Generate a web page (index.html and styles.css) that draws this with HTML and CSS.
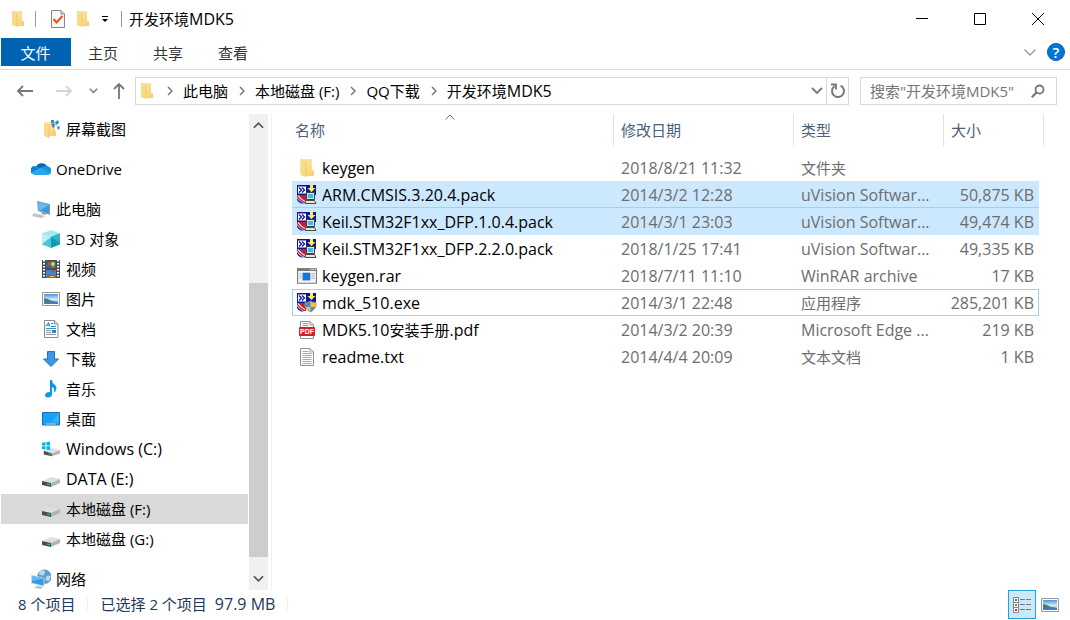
FILE: index.html
```html
<!DOCTYPE html>
<html lang="zh-CN">
<head>
<meta charset="utf-8">
<meta name="viewport" content="width=device-width, initial-scale=1">
<title>开发环境MDK5</title>
<link rel="stylesheet" href="styles.css">
</head>
<body>
<svg class="sprite" aria-hidden="true">
  <defs>
    <linearGradient id="gold" x1="0" y1="0" x2="1" y2="1"><stop offset="0" stop-color="#ffe9a6"/><stop offset="1" stop-color="#f6cf6a"/></linearGradient>
    <linearGradient id="sky" x1="0" y1="0" x2="0" y2="1"><stop offset="0" stop-color="#4f94dc"/><stop offset=".55" stop-color="#d4ebf8"/><stop offset="1" stop-color="#4a88b8"/></linearGradient>
  </defs>
  <symbol id="folder" viewBox="0 0 18 18">
    <path d="M3 1h10v10h2v5H5z" fill="#f3cf74"/>
    <path d="M5 1h8v10h2v5H6z" fill="url(#gold)"/>
    <path d="M3 1l5 2v14l-5-2z" fill="#f9dc87"/>
    <path d="M8 3v14" stroke="#e9bd57" stroke-width=".6"/>
  </symbol>
  <symbol id="folder-shot" viewBox="0 0 18 18">
    <path d="M4 2h9v9h1v5H6z" fill="url(#gold)"/>
    <path d="M2 2l5 2v14l-5-2z" fill="#f9dc87"/>
    <path d="M7 4v14" stroke="#e2b550" stroke-width=".6"/>
    <path d="M10 1l7 7M10 6l5-5" stroke="#bcd9f0" stroke-width="1"/>
    <path d="M9 0h3v3H9zM13 2l3-2 1 3-3 2zM9 4l3-1 1 3-2 2zM15 7l2-1 1 2-2 2z" fill="#3b87cf"/>
  </symbol>
  <symbol id="cloud" viewBox="0 0 20 14">
    <path d="M5 5a6 5.500 0 0 1 10.500-1.500L18 6 11 9 3 6z" fill="#0b63b8"/>
    <path d="M2 12A4 4 0 0 1 5 4.500q2.500-.5 5 1.500l4 5-8 2H4z" fill="#1580d3"/>
    <path d="M15.500 4.500A4.300 4.300 0 0 1 17 13H5Q1.500 12.500 1 10l9-4.500z" fill="#28a8ea"/>
    <path d="M10 6q2-2.500 5.500-1.700A4.300 4.300 0 0 1 19 11z" fill="#1793df"/>
  </symbol>
  <symbol id="pc" viewBox="0 0 20 18">
    <path d="M6 1l13 3v11L7 11z" fill="#8f9ba5"/>
    <path d="M7 2.200l11 2.600v8.700L8 10z" fill="#2f9de8"/>
    <path d="M7 2.200l11 2.600-9 5.800L8 10z" fill="#64baf2"/>
    <path d="M11 12l4 1v2l-5-1z" fill="#9aa4ab"/>
    <path d="M3 13l12 3-4 2-11-2z" fill="#d2d9de"/>
    <path d="M3 14l9 2.500M2 15.500l9 2" stroke="#9aa6af" stroke-width=".6"/>
  </symbol>
  <symbol id="cube" viewBox="0 0 18 18">
    <path d="M9 0l9 3.500L9 7 0 3.500z" fill="#a4e9f0"/>
    <path d="M0 3.500L9 7v11l-9-3.500z" fill="#4cc5d6"/>
    <path d="M18 3.500L9 7v11l9-3.500z" fill="#1199b8"/>
    <path d="M0 3.500L9 7l-9 7z" fill="#bff0f4"/>
    <path d="M18 3.500L9 7l9 6z" fill="#2bb4d2"/>
  </symbol>
  <symbol id="film" viewBox="0 0 18 18">
    <path d="M0 0h18v18H0z" fill="#4b4b4b"/>
    <path d="M2 0v18M16 0v18" stroke="#fff" stroke-width="2" stroke-dasharray="1.500 1.500"/>
    <path d="M4 1h10v7H4z" fill="#315ea8"/><path d="M4 10h10v8H4z" fill="#3c86db"/>
    <path d="M5 6h4V2H7zM5 17l3-3 3 2 3-1v3z" fill="#b2542c"/>
    <circle cx="11" cy="4" r="2" fill="#eed038"/><path d="M9 6h4v2H9z" fill="#39a04a"/><circle cx="11" cy="11" r="1.500" fill="#dd3d30"/>
    <path d="M8 16h4v1H8z" fill="#e9cc37"/>
  </symbol>
  <symbol id="photo" viewBox="0 0 18 14">
    <path d="M.5.5h17v13H.5z" fill="#fff" stroke="#999"/>
    <path d="M2 2h14v10H2z" fill="url(#sky)"/>
    <path d="M2 6l4 1 4 2 6 1v1H2z" fill="#4d7f6d"/>
    <path d="M2 10h14v2H2z" fill="#3e80b6"/>
  </symbol>
  <symbol id="doc" viewBox="0 0 18 18">
    <path d="M2.500.5h10L16 4v13.500H2.500z" fill="#fff" stroke="#8b8b8b"/>
    <path d="M12.500 .5V4H16" fill="#e8e8e8" stroke="#8b8b8b"/>
    <path d="M4 6.500l2.500-4 1 4M5 5h2.500M9 3.500h2" stroke="#1d83c6" fill="none"/>
    <path d="M9 6.500h5M4 8.500h10" stroke="#2c92cc"/><path d="M4 10.500h5M4 12.500h5M4 14.500h10" stroke="#8d9aa3"/>
    <path d="M10 10h4v3h-4z" fill="#3782b8"/>
  </symbol>
  <symbol id="down" viewBox="0 0 18 18"><path d="M5.500 1.500h7V9h4L9 16.500 1.500 9h4z" fill="#3a97e4" stroke="#1f74be"/></symbol>
  <symbol id="note" viewBox="0 0 18 18"><path d="M8 0h2q0 3 3 5 3 3 0 7h-1q1-4-2-5v7q0 3-3.500 3.500Q3 17.500 3 15q.5-3 5-3z" fill="#0b96ec"/></symbol>
  <symbol id="desktop" viewBox="0 0 18 14"><path d="M.5.5h17v12.500H.5z" fill="#18a1f8" stroke="#1a6eae"/><path d="M17 1v9L9 11z" fill="#36b1fb"/><path d="M0 11.500h18V13H0z" fill="#1270b5"/><path d="M2 12h1M4 12h10M15 12h1" stroke="#fff" stroke-width=".8"/></symbol>
  <symbol id="disk" viewBox="0 0 18 18">
    <path d="M0 11l9-4 9 2-9 4z" fill="#dedfe2"/>
    <path d="M0 11l9 2v4l-9-2z" fill="#4a4b4d"/>
    <path d="M9 13l9-4v4l-9 4z" fill="#b2b3b7"/>
    <path d="M5 14l3 .7" stroke="#37d257" stroke-width="1.200"/>
  </symbol>
  <symbol id="windisk" viewBox="0 0 20 18">
    <path d="M3 11l8-3 9 2-9 4z" fill="#dedfe2"/><path d="M2 11l9 3v3l-9-2z" fill="#4a4b4d"/><path d="M11 14l9-4v4l-9 3z" fill="#b2b3b7"/>
    <path d="M7 14.500l3 .7" stroke="#37d257"/>
    <path d="M0 2l4-.5V5H0zM5 1.300L9 1v4H5zM0 6h4v3.500L0 9zM5 6h4v4l-4-.4z" fill="#00b4ef"/>
  </symbol>
  <symbol id="network" viewBox="0 0 18 18">
    <circle cx="12" cy="7" r="6.500" fill="#5d9bc9"/><path d="M8 2q4-2 5 1l-2 3-4-1zM14 6l4 0-2 5-3-1z" fill="#b8dbe9"/>
    <path d="M0 5l12 3v8L0 13z" fill="#d5e6ef"/><path d="M.8 6l10.500 2.500v6.500L.8 12.300z" fill="#2f9be5"/><path d="M.8 6l10.500 2.500L1 11z" fill="#65baf0"/>
    <path d="M5 15l6 1-2 2-6-1z" fill="#b8c3cb"/>
  </symbol>
  <symbol id="keil-base" viewBox="0 0 20 20">
    <path d="M0 0h19v10H0z" fill="#10139c"/>
    <path d="M1 1.500h8v7H1z" fill="#fff"/>
    <path d="M2 2.500l2.500 2.500L2 7.500M5 2.500L7.500 5 5 7.500" fill="none" stroke="#10139c" stroke-width="1.300"/>
    <path d="M0 10h9v8H7q-4-2-7-6z" fill="#c4202c"/>
    <path d="M0 13q3 4 7 5.500H4Q1 17 0 15z" fill="#2a2aa8"/>
    <path d="M1 10.500q3 4 7 6" fill="none" stroke="#fff" stroke-width="1.200"/>
    <path d="M13 0h3v3h2.500l-4 4-4-4H13z" fill="#ffec52"/>
  </symbol>
  <symbol id="keil" viewBox="0 0 20 20">
    <use href="#keil-base"/>
    <path d="M9.500 7.500h8v7h-8z" fill="#dfe3e6" stroke="#333c48"/><path d="M11 9h5v4h-5z" fill="#35bfe4"/>
    <path d="M13 3h3v2l-1.500 2L13 5z" fill="#ffec52"/>
    <path d="M8.500 15.500h9l1.500 3H8z" fill="#e7e6d8" stroke="#4b4b4b"/>
  </symbol>
  <symbol id="keil-exe" viewBox="0 0 20 20">
    <use href="#keil-base"/><path d="M8 9.500q4 0 5.500-1.500 2 1.500 5.500 1.500 1 6-5.500 9.500Q7 15.500 8 9.500z" fill="#4f8fc7" stroke="#8a8f94"/>
    <path d="M13.500 8.500V14h5q.5-2 .3-4Q15.500 10 13.500 8.500zM8.500 14h5v4.500q-4-2-5-4.500z" fill="#f0c341"/>
  </symbol>
  <symbol id="rar" viewBox="0 0 18 14"><path d="M.5.5h17v13H.5z" fill="#f7f7f7" stroke="#777"/><path d="M0 0h18v2.500H0z" fill="#7b7b7b"/><path d="M12 1h1M14 1h1M16 1h1" stroke="#fff"/><path d="M5 4h7v7H5z" fill="#1478d1"/><path d="M2 5h2M2 7h2M2 9h2M13 5h3M13 7h3M13 9h3" stroke="#aaa"/></symbol>
  <symbol id="txt" viewBox="0 0 16 18"><path d="M1.500.5H11L14.500 4v13.500h-13z" fill="#fafafa" stroke="#8f8f8f"/><path d="M11 .5V4h3.500M3.500 3.500h6M3.500 5.500h9M3.500 7.500h9M3.500 9.500h9M3.500 11.500h9M3.500 13.500h9M3.500 15.500h9" stroke="#999" fill="none" stroke-width=".8"/></symbol>
  <symbol id="check" viewBox="0 0 14 18"><path d="M.5.5H10L13.500 4v13.500H.5z" fill="#f7f7f7" stroke="#858585"/><path d="M10 .5V4h3.500" fill="#ddd" stroke="#858585"/><path d="M2.500 9l3 3.500L11.500 6" fill="none" stroke="#e8561d" stroke-width="2"/></symbol>
  <symbol id="chev-r" viewBox="0 0 6 10"><path d="M1 1l4 4-4 4" fill="none" stroke="#777" stroke-width="1.500"/></symbol>
  <symbol id="chev-d" viewBox="0 0 12 8"><path d="M1 1l5 5 5-5" fill="none" stroke="currentColor" stroke-width="1.800"/></symbol>
  <symbol id="arrow" viewBox="0 0 16 12"><path d="M16 6H1M6 1L1 6l5 5" fill="none" stroke="currentColor" stroke-width="1.800"/></symbol>
</svg>

<div class="window">
  <header class="titlebar">
    <svg class="i18"><use href="#folder"/></svg>
    <span class="rule"></span>
    <button class="quick check" aria-label="属性"><svg><use href="#check"/></svg></button>
    <button class="quick newfolder" aria-label="新建文件夹"><svg><use href="#folder"/></svg></button>
    <button class="quick more" aria-label="自定义快速访问工具栏"><svg viewBox="0 0 8 8"><path d="M1 1.500h6" stroke="#000"/><path d="M1 4h6L4 7z"/></svg></button>
    <span class="rule second"></span>
    <h1>开发环境<span class="latin">MDK5</span></h1>
    <div class="winbuttons">
      <button aria-label="最小化"><svg viewBox="0 0 12 12"><path d="M0 5.500h12"/></svg></button>
      <button aria-label="最大化"><svg viewBox="0 0 12 12"><path d="M.5.5h11v11H.5z"/></svg></button>
      <button aria-label="关闭"><svg viewBox="0 0 12 12"><path d="M0 0l12 12M12 0L0 12"/></svg></button>
    </div>
  </header>

  <nav class="ribbon" aria-label="功能区">
    <button class="tab file">文件</button>
    <button class="tab">主页</button>
    <button class="tab">共享</button>
    <button class="tab">查看</button>
    <button class="expand" aria-label="展开功能区"><svg viewBox="0 0 12 7"><path d="M.5.5L6 6 11.500.5" fill="none" stroke="#999" stroke-width="1.300"/></svg></button>
    <button class="help" aria-label="帮助">?</button>
  </nav>

  <div class="address">
    <button class="nav-btn back" aria-label="后退"><svg><use href="#arrow"/></svg></button>
    <button class="nav-btn forward" aria-label="前进"><svg><use href="#arrow"/></svg></button>
    <button class="nav-btn recent" aria-label="最近位置"><svg><use href="#chev-d"/></svg></button>
    <button class="nav-btn up" aria-label="上移"><svg viewBox="0 0 12 16"><path d="M6 16V1M1 6l5-5 5 5" fill="none" stroke="#777" stroke-width="1.800"/></svg></button>
    <div class="path">
      <svg class="i18"><use href="#folder"/></svg>
      <svg class="crumb-sep"><use href="#chev-r"/></svg><a href="#">此电脑</a>
      <svg class="crumb-sep"><use href="#chev-r"/></svg><a href="#">本地磁盘 (F:)</a>
      <svg class="crumb-sep"><use href="#chev-r"/></svg><a href="#">QQ下载</a>
      <svg class="crumb-sep"><use href="#chev-r"/></svg><a href="#">开发环境<span class="latin">MDK5</span></a>
      <button class="drop" aria-label="以前的位置"><svg><use href="#chev-d"/></svg></button>
      <button class="refresh" aria-label="刷新"><svg viewBox="0 0 16 16"><path d="M10.500 2.600A6 6 0 1 1 4.500 3.200" fill="none" stroke="#777" stroke-width="2"/><path d="M1 1.500h5v5" fill="none" stroke="#777" stroke-width="1.800"/></svg></button>
    </div>
    <label class="search">
      <input type="text" placeholder='搜索"开发环境MDK5"' aria-label="搜索">
      <svg viewBox="0 0 14 14"><circle cx="8.500" cy="5.500" r="4" fill="none" stroke="#777" stroke-width="1.800"/><path d="M5.500 8.500L.8 13.200" stroke="#777" stroke-width="2.200"/></svg>
    </label>
  </div>

  <div class="body">
    <nav class="tree" aria-label="导航窗格">
      <a href="#" class="child"><svg class="i18"><use href="#folder-shot"/></svg>屏幕截图</a>
      <a href="#" class="root"><svg class="i20"><use href="#cloud"/></svg>OneDrive</a>
      <a href="#" class="root"><svg class="i20"><use href="#pc"/></svg>此电脑</a>
      <a href="#" class="child"><svg class="i18"><use href="#cube"/></svg>3D 对象</a>
      <a href="#" class="child"><svg class="i18"><use href="#film"/></svg>视频</a>
      <a href="#" class="child"><svg class="i18"><use href="#photo"/></svg>图片</a>
      <a href="#" class="child"><svg class="i18"><use href="#doc"/></svg>文档</a>
      <a href="#" class="child"><svg class="i18"><use href="#down"/></svg>下载</a>
      <a href="#" class="child"><svg class="i18"><use href="#note"/></svg>音乐</a>
      <a href="#" class="child"><svg class="i18"><use href="#desktop"/></svg>桌面</a>
      <a href="#" class="child latin"><svg class="i18"><use href="#windisk"/></svg>Windows (C:)</a>
      <a href="#" class="child latin"><svg class="i18"><use href="#disk"/></svg>DATA (E:)</a>
      <a href="#" class="child current" aria-current="true"><svg class="i18"><use href="#disk"/></svg>本地磁盘 (F:)</a>
      <a href="#" class="child"><svg class="i18"><use href="#disk"/></svg>本地磁盘 (G:)</a>
      <a href="#" class="root"><svg class="i20"><use href="#network"/></svg>网络</a>
    </nav>
    <div class="scrollbar">
      <button class="flip" aria-label="向上滚动"><svg><use href="#chev-d"/></svg></button>
      <div class="track"><div class="thumb"></div></div>
      <button aria-label="向下滚动"><svg><use href="#chev-d"/></svg></button>
    </div>
    <main class="files">
      <table>
        <colgroup><col><col class="c-date"><col class="c-type"><col class="c-size"><col class="c-end"></colgroup>
        <thead>
          <tr><th aria-sort="ascending">名称<svg class="sort" viewBox="0 0 10 6"><path d="M.5 5.500L5 1l4.500 4.500" fill="none" stroke="#777"/></svg></th><th>修改日期</th><th>类型</th><th colspan="2">大小</th></tr>
        </thead>
        <tbody>
          <tr><td><span class="name"><svg class="i20"><use href="#folder"/></svg>keygen</span></td><td>2018/8/21 11:32</td><td><span class="cjk">文件夹</span></td><td></td></tr>
          <tr class="selected"><td><span class="name"><svg class="i20"><use href="#keil"/></svg>ARM.CMSIS.3.20.4.pack</span></td><td>2014/3/2 12:28</td><td>uVision Softwar...</td><td>50,875 KB</td></tr>
          <tr class="selected"><td><span class="name"><svg class="i20"><use href="#keil"/></svg>Keil.STM32F1xx_DFP.1.0.4.pack</span></td><td>2014/3/1 23:03</td><td>uVision Softwar...</td><td>49,474 KB</td></tr>
          <tr><td><span class="name"><svg class="i20"><use href="#keil"/></svg>Keil.STM32F1xx_DFP.2.2.0.pack</span></td><td>2018/1/25 17:41</td><td>uVision Softwar...</td><td>49,335 KB</td></tr>
          <tr><td><span class="name"><svg class="i20 small"><use href="#rar"/></svg>keygen.rar</span></td><td>2018/7/11 11:10</td><td>WinRAR archive</td><td>17 KB</td></tr>
          <tr class="focused"><td><span class="name"><svg class="i20"><use href="#keil-exe"/></svg>mdk_510.exe</span></td><td>2014/3/1 22:48</td><td><span class="cjk">应用程序</span></td><td>285,201 KB</td></tr>
          <tr><td><span class="name"><svg class="i20 small" viewBox="0 0 16 18"><path d="M1.500.5H11L14.500 4v13.500h-13z" fill="#fff" stroke="#8d8d8d"/><path d="M11 .5V4h3.500M3.500 2.500h6M3.500 4.500h6" stroke="#999" fill="none"/><rect y="6" width="16" height="9" rx="1" fill="#d21f28"/><text class="pdf-label" x="8" y="13" text-anchor="middle">PDF</text></svg><span>MDK5.10<span class="cjk">安装手册</span>.pdf</span></span></td><td>2014/3/2 20:39</td><td>Microsoft Edge ...</td><td>219 KB</td></tr>
          <tr><td><span class="name"><svg class="i20 small"><use href="#txt"/></svg>readme.txt</span></td><td>2014/4/4 20:09</td><td><span class="cjk">文本文档</span></td><td>1 KB</td></tr>
        </tbody>
      </table>
    </main>
  </div>

  <footer class="status">
    <span class="count">8 个项目</span>
    <span class="picked">已选择 2 个项目<span class="latin">97.9 MB</span></span>
    <div class="views">
      <button class="active" aria-label="详细信息"><svg viewBox="0 0 18 16"><path d="M.5.5h5v15h-5zM.5 5.500h5M.5 10.500h5" fill="#fff" stroke="#888"/><path d="M2 3h2" stroke="#2a8fa8" stroke-width="2"/><path d="M2 8h2" stroke="#9a7d3b" stroke-width="2"/><path d="M2 13h2" stroke="#d22" stroke-width="2"/><path d="M7 2.500h5M13 2.500h5M7 7.500h5M13 7.500h5M7 12.500h5M13 12.500h5" stroke="#777"/></svg></button>
      <button aria-label="大图标"><svg><use href="#photo"/></svg></button>
    </div>
  </footer>
</div>
</body>
</html>
```

FILE: styles.css
```css
* { box-sizing: border-box; }

body {
  margin: 0;
  background: #fff;
  color: #000;
  font: 15px/20px "Open Sans", "Noto Sans CJK SC", sans-serif;
}

button {
  display: flex;
  align-items: center;
  justify-content: center;
  padding: 0;
  border: 0;
  background: none;
  color: #777;
  font: inherit;
}

a { color: inherit; text-decoration: none; }
svg { display: block; flex: none; }
.sprite { position: absolute; width: 0; height: 0; }
.i18 { width: 18px; height: 18px; }
.i20 { width: 20px; height: 20px; }
.i20.small { height: 18px; }
.latin { font-size: 16px; }
.cjk { font-size: 15px; }
.pdf-label { font: 700 7px "Liberation Sans", sans-serif; fill: #fff; }

.window { display: flex; flex-direction: column; min-height: 100vh; }

/* Title bar */
.titlebar { display: flex; align-items: center; height: 38px; padding-left: 9px; }
.rule { width: 1px; height: 16px; margin: 0 15px 0 8px; background: #999; }
.rule.second { margin: 0 7px 0 12px; }
.quick.check svg { width: 14px; height: 18px; }
.quick.newfolder { margin-left: 9px; }
.quick.newfolder svg { width: 18px; height: 18px; }
.quick.more { margin-left: 9px; }
.quick.more svg { width: 8px; height: 8px; }
h1 { margin: 0; font-size: 15px; font-weight: 400; }
.winbuttons { display: flex; align-self: stretch; margin-left: auto; padding-right: 3px; }
.winbuttons button { width: 58px; }
.winbuttons svg { width: 12px; height: 12px; fill: none; stroke: #000; }

/* Ribbon tabs */
.ribbon { display: flex; align-items: center; height: 32px; padding: 0 5px 3px 1px; border-bottom: 1px solid #dadbdc; }
.tab { width: 65px; height: 28px; padding: 2px 1px 0 0; color: #333; }
.tab.file { width: 70px; background: #0063b1; color: #fff; }
.expand { margin-left: auto; }
.expand svg { width: 12px; height: 7px; }
.help { width: 18px; height: 18px; margin-left: 11px; border: 1px solid #005fae; border-radius: 50%; background: #0078d7; color: #fff; font-weight: 600; line-height: 16px; }

/* Address bar */
.address { display: flex; align-items: center; height: 44px; padding: 0 13px 2px 17px; }
.nav-btn svg { width: 16px; height: 12px; }
.forward { margin-left: 23px; color: #d5d5d5; }
.forward svg { transform: scaleX(-1); }
.recent { margin-left: 17px; }
.recent svg { width: 9px; height: 6px; }
.up { margin-left: 15px; }
.up svg { width: 12px; height: 16px; }
.path { display: flex; flex: 1; align-items: center; height: 28px; margin-left: 10px; padding-left: 2px; border: 1px solid #d9d9d9; }
.path a { padding-bottom: 1px; }
.crumb-sep { width: 6px; height: 10px; margin: 0 10px 0 11px; }
.path .i18 + .crumb-sep { margin-left: 11px; }
.drop { width: 19px; margin-left: auto; }
.drop svg { width: 12px; height: 8px; }
.refresh { align-self: stretch; width: 22px; border-left: 1px solid #d9d9d9; }
.refresh svg { width: 16px; height: 16px; }
.search { display: flex; align-items: center; width: 197px; height: 28px; margin-left: 11px; padding: 0 11px 0 9px; border: 1px solid #d9d9d9; }
.search input { flex: 1; min-width: 0; padding: 0; border: 0; outline: 0; background: none; font: inherit; }
.search input::placeholder { color: #757575; opacity: 1; }
.search svg { width: 14px; height: 14px; }

/* Navigation pane */
.body { display: flex; flex: 1; }
.tree { width: 248px; margin-bottom: -4px; padding-left: 1px; }
.tree a { display: flex; align-items: center; gap: 6px; height: 30px; padding-left: 41px; }
.tree .root { gap: 5px; margin-top: 10px; padding-left: 30px; }
.tree .current { background: #d9d9d9; }

.scrollbar { display: flex; flex-direction: column; width: 19px; margin: 0 3px 0 1px; background: #f0f0f0; }
.scrollbar button { height: 22px; color: #505050; }
.scrollbar svg { width: 11px; height: 8px; }
.scrollbar .flip svg { transform: scaleY(-1); }
.track { display: flex; flex: 1; flex-direction: column; justify-content: flex-end; padding-bottom: 11px; }
.thumb { height: 65%; background: #cdcdcd; }

/* File list */
.files { flex: 1; min-width: 0; padding: 0 26px 0 20px; border-left: 1px solid #f0f0f0; }
table { width: 100%; border-collapse: separate; border-spacing: 0; table-layout: fixed; }
.c-date { width: 180px; }
.c-type { width: 150px; }
.c-size { width: 95px; }
.c-end { width: 5px; }
th { position: relative; height: 32px; padding: 0 7px; border-right: 1px solid #e2e2e2; color: #4c607a; font-weight: 400; text-align: left; }
th:first-child { padding-left: 3px; }
.sort { position: absolute; top: 0; left: calc(50% - 7px); width: 10px; height: 6px; }
tbody::before { content: ""; display: block; height: 8px; }
td { height: 27px; padding: 0 7px; border: 1px solid transparent; border-width: 1px 0; color: #6d6d6d; font-size: 16px; white-space: nowrap; }
td:first-child { padding: 0 0 0 5px; color: #000; }
td:nth-child(4) { padding: 0 5px 0 0; text-align: right; }
.name { display: flex; align-items: center; gap: 5px; }
.selected td { background: #cce8ff; border-color: #cce8ff; }
.selected:has(+ .selected) td { border-bottom-color: #99d1ff; }
.focused td { border-color: #99d1ff; }
.focused td:first-child { padding-left: 4px; border-left: 1px solid #99d1ff; }
.focused td:nth-child(4) { padding-right: 4px; border-right: 1px solid #99d1ff; }

/* Status bar */
.status { display: flex; align-items: center; height: 30px; padding: 0 6px 1px 18px; color: #1e395b; }
.count, .picked { margin-bottom: 2px; padding-right: 12px; border-right: 1px solid #f0f0f0; line-height: 14px; }
.picked { padding-left: 12px; }
.picked span { margin-left: 8px; }
.views { display: flex; align-items: center; align-self: stretch; margin-left: auto; }
.views button { width: 28px; height: 29px; }
.views .active { border: 1px solid #26a0da; background: #cbe8f6; }
.views svg { width: 18px; height: 16px; }
```
